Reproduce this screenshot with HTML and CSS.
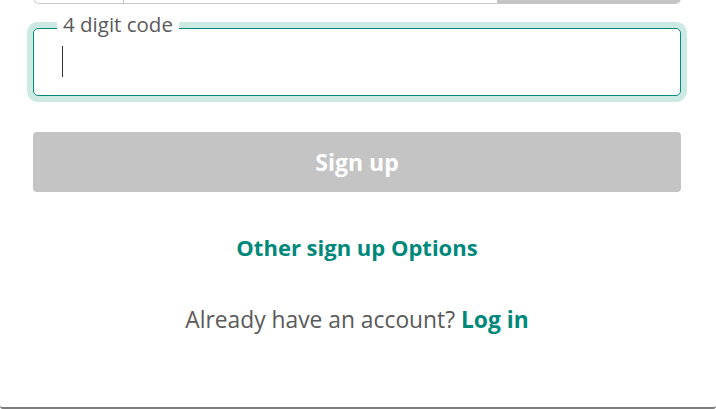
FILE: index.html
```html
<!DOCTYPE html>
<html lang="en">
<head>
<meta charset="utf-8">
<title>Sign up</title>
<link rel="stylesheet" href="styles.css">
</head>
<body>
<div class="frame">
  <div class="phone-row">
    <div class="country"></div>
    <div class="number"></div>
    <div class="send"></div>
  </div>
  <div class="field">
    <span class="field-label">4 digit code</span>
    <div class="field-input"><span class="caret"></span></div>
  </div>
  <button class="btn-signup" type="button">Sign up</button>
  <a class="other-link" href="#">Other sign up Options</a>
  <p class="login-line">Already have an account? <a class="login-link" href="#">Log in</a></p>
</div>
</body>
</html>
```
FILE: styles.css
```css
* { box-sizing: border-box; }
html, body { margin: 0; padding: 0; background: #fff; }
body { font-family: "Open Sans", "Noto Sans", sans-serif; overflow: hidden; }

.frame {
  width: 716px;
  height: 409px;
  padding: 0 35px 0 33px;
  display: flex;
  flex-direction: column;
  border-bottom: 2px solid #7d7d7d;
  border-radius: 0 0 3px 3px;
  overflow: hidden;
}

.phone-row {
  display: flex;
  height: 50px;
  margin-top: -46px;
  flex-shrink: 0;
  border-radius: 0 0 6px 6px;
  overflow: hidden;
}
.country {
  width: 91px;
  border: 1px solid #c8c8c8;
  border-top: none;
  border-radius: 0 0 0 6px;
}
.number {
  width: 373px;
  border-bottom: 1px solid #c8c8c8;
}
.send {
  flex: 1;
  background: #c4c4c4;
}

.field {
  position: relative;
  margin-top: 24px;
  height: 68px;
  flex-shrink: 0;
  border: 1px solid #00897b;
  border-radius: 5px;
  box-shadow: 0 0 0 6px #cde9e3;
}
.field-label {
  position: absolute;
  left: 23px;
  top: -15px;
  padding: 0 6px;
  background: #fff;
  font-size: 20.5px;
  line-height: 20px;
  color: #5a5a5a;
}
.field-input {
  height: 100%;
  padding: 17px 0 0 28px;
}
.caret {
  display: block;
  width: 1px;
  height: 31px;
  background: #333;
}

.btn-signup {
  margin-top: 36px;
  height: 60px;
  flex-shrink: 0;
  border: none;
  border-radius: 4px;
  background: #c4c4c4;
  color: #fff;
  font-family: inherit;
  font-size: 23px;
  font-weight: 700;
}

.other-link {
  margin-top: 40px;
  align-self: center;
  color: #00897b;
  font-size: 22px;
  font-weight: 700;
  line-height: 30px;
  text-decoration: none;
}

.login-line {
  margin: 43px 0 0;
  text-align: center;
  color: #5a5a5a;
  font-size: 22.8px;
  line-height: 30px;
}
.login-link {
  color: #00897b;
  font-weight: 700;
  text-decoration: none;
}
```
